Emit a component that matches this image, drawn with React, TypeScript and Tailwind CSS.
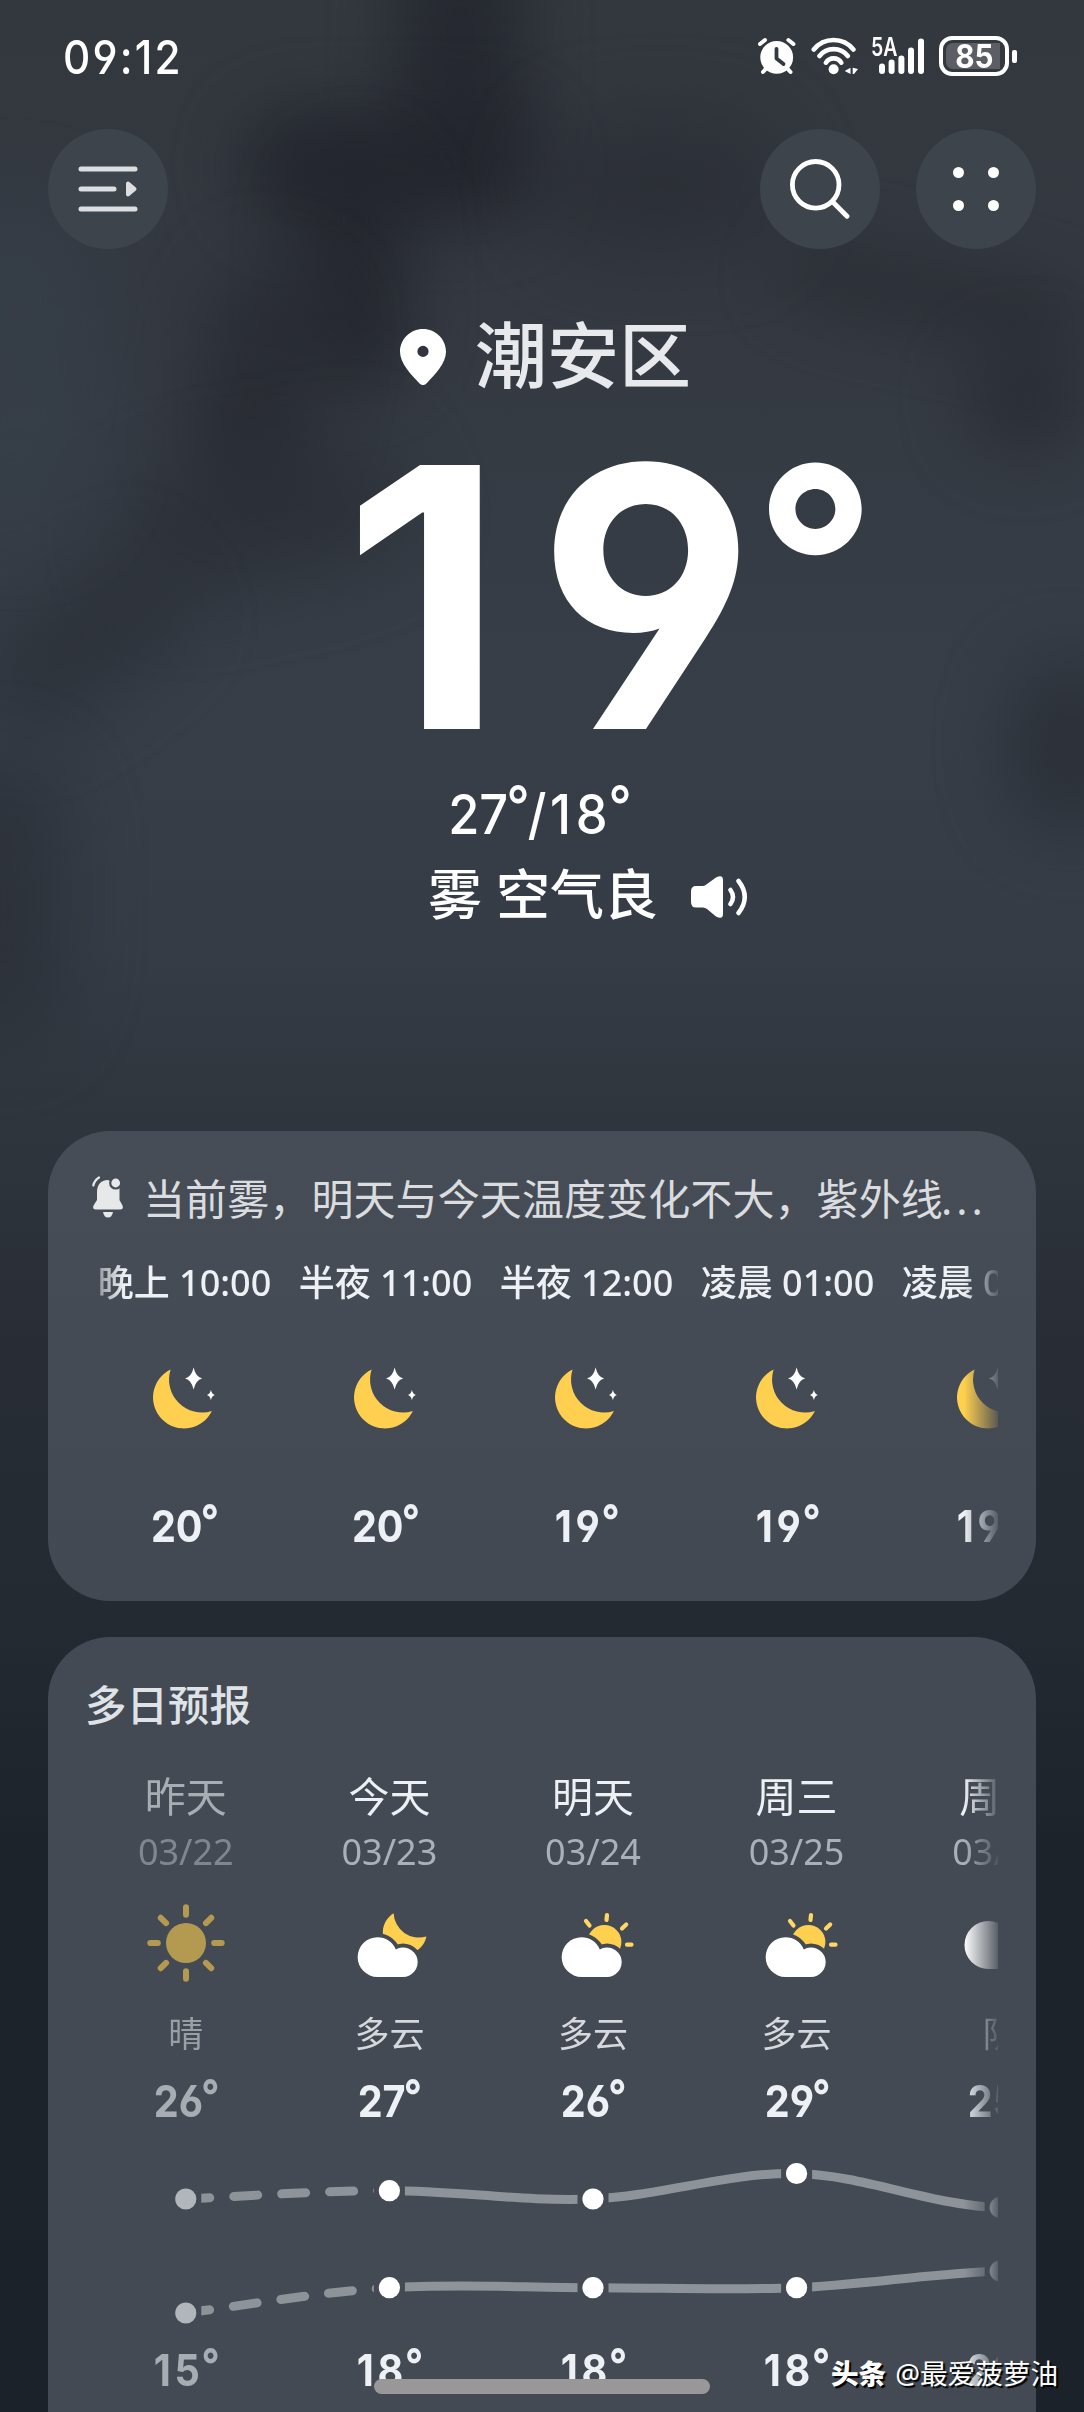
import React from 'react'
import clsx from 'clsx'

const hours = [
  { label: '晚上 10:00', temp: 20 },
  { label: '半夜 11:00', temp: 20 },
  { label: '半夜 12:00', temp: 19 },
  { label: '凌晨 01:00', temp: 19 },
  { label: '凌晨 02:00', temp: 19 },
]

type Day = {
  name: string
  date: string
  icon: React.ReactNode
  text: string
  high: number
  low: number
  past?: boolean
}

const cloudPath =
  'M26.5 32.2a19.8 19.8 0 0 1 18.3 12.2a14.7 14.7 0 1 1 6.5 27.5H26.5a19.8 19.8 0 0 1 0-39.7z'

const MoonStars = () => (
  <svg viewBox="0 0 64 64" className="h-16 w-16 overflow-visible">
    <path d="M17.6 3.5A31 31 0 1 0 58.9 45A33 33 0 0 1 17.6 3.5z" fill="#ffd04f" />
    <path d="M40.6 1.5Q42.6 10.7 49.1 12.5Q42.6 14.3 40.6 23.5Q38.6 14.3 32.1 12.5Q38.6 10.7 40.6 1.5z" fill="#fff" />
    <path d="M57.9 23.8Q58.7 28 61.8 29Q58.7 30 57.9 34.2Q57.1 30 54 29Q57.1 28 57.9 23.8z" fill="#fff" />
  </svg>
)

const Sun = () => (
  <svg viewBox="0 0 76 76" className="h-[76px] w-[76px] overflow-visible">
    <circle cx="38" cy="38" r="20" fill="#ffd04f" />
    {[0, 45, 90, 135, 180, 225, 270, 315].map((deg) => (
      <path key={deg} d="M38 2.3V9.8" stroke="#ffd04f" strokeWidth="6" strokeLinecap="round" transform={`rotate(${deg} 38 38)`} />
    ))}
  </svg>
)

const CloudMoon = () => (
  <svg viewBox="0 0 76 76" className="h-[76px] w-[76px] overflow-visible">
    <path d="M42.6 8.3A22 22 0 1 0 75.4 31.5A25.5 25.5 0 0 1 42.6 8.3z" fill="#ffd04f" />
    <path d={cloudPath} fill="#434a53" stroke="#434a53" strokeWidth="8" />
    <path d={cloudPath} fill="#fff" />
  </svg>
)

const CloudSun = () => (
  <svg viewBox="0 0 76 76" className="h-[76px] w-[76px] overflow-visible">
    <circle cx="49.4" cy="37" r="17" fill="#ffd04f" />
    <path d="M52 10L51.5 15M71.2 19.5L67 23.5M72 39.7H76.5M31 16L34.5 20.5" stroke="#ffd863" strokeWidth="4.2" strokeLinecap="round" />
    <path d={cloudPath} fill="#434a53" stroke="#434a53" strokeWidth="8" />
    <path d={cloudPath} fill="#fff" />
  </svg>
)

const Overcast = () => (
  <svg viewBox="0 0 76 76" className="h-[76px] w-[76px] overflow-visible">
    <path d="M26.5 16a24 24 0 0 1 22 14.500a17 17 0 1 1 7 33.5H26.5a24 24 0 0 1 0-48z" fill="#fff" />
  </svg>
)

const days: Day[] = [
  { name: '昨天', date: '03/22', icon: <Sun />, text: '晴', high: 26, low: 15, past: true },
  { name: '今天', date: '03/23', icon: <CloudMoon />, text: '多云', high: 27, low: 18 },
  { name: '明天', date: '03/24', icon: <CloudSun />, text: '多云', high: 26, low: 18 },
  { name: '周三', date: '03/25', icon: <CloudSun />, text: '多云', high: 29, low: 18 },
  { name: '周四', date: '03/26', icon: <Overcast />, text: '阴', high: 25, low: 20 },
]

const Temp = ({ value }: { value: number }) => (
  <span className="ml-[3px] inline-flex h-[50px] scale-x-[0.9] items-center font-[Inter] text-[44px] font-bold leading-[50px] [font-feature-settings:'cv03','cv04']">
    {/* a leading 1 is narrow, so open it up to the width of the other digits */}
    <span className={clsx(value < 20 && 'tracking-[4px]')}>{value}</span>
    <span className="relative -left-0.5 -top-[6px]">°</span>
  </span>
)

const StatusBar = () => (
  <div className="flex h-28 items-center justify-between pl-[63px] pr-[67px] text-white">
    <span className="origin-left scale-x-[0.9] font-[Inter] text-[47px] font-medium leading-none tracking-[2.4px] [font-feature-settings:'cv04']">09:12</span>
    <div className="flex items-center">
      <svg viewBox="0 0 38 38" className="h-[38px] w-[38px]" fill="none" strokeLinecap="round" strokeLinejoin="round">
        <circle cx="18.7" cy="20.3" r="16.4" fill="#fff" />
        <path d="M2 7L7 3M30.4 3L35.4 7M5 35L9.5 30M32.5 35L28 30" stroke="#fff" strokeWidth="4" />
        <path d="M18.5 12V21.5L25.5 27" stroke="#343a42" strokeWidth="3.8" />
      </svg>
      <svg viewBox="0 0 48 38" className="ml-[15px] h-[38px] w-12" fill="none" stroke="#fff" strokeWidth="4.6" strokeLinecap="round">
        <path d="M2.8 12.5A25.4 25.4 0 0 1 42.4 12.5M8.5 19A18 18 0 0 1 36.8 19M15 25.7A8.8 8.8 0 0 1 30.2 25.7" />
        <circle cx="22.6" cy="32.3" r="5" fill="#fff" stroke="none" />
        <path d="M33.7 34L39.5 30.7V37zM41.7 30.7L47 32L43 37H41.7z" fill="#fff" stroke="none" />
      </svg>
      <div className="relative ml-3 h-[38px] w-[54px]">
        <span className="absolute left-0 top-[1px] origin-left scale-x-[0.78] font-[Inter] text-[25px] font-semibold leading-[18px]">5A</span>
        <svg viewBox="0 0 54 38" className="h-full w-full" stroke="#fff" strokeWidth="6" strokeLinecap="round">
          <path d="M11 29.5V34M20.6 25.5V34M30.4 21.5V34M40 13.5V34M50 4.5V34" />
        </svg>
      </div>
      <div className="ml-[14px] flex items-center gap-[3px]">
        <div className="h-10 w-[70px] rounded-[13px] border-4 border-white p-[3px]">
          <div className="flex h-full w-[54px] items-center justify-center rounded-l-[7px] bg-[#5c5d65]">
            <span className="-mr-0.5 scale-x-[0.9] font-[Inter] text-[33px] font-bold leading-none">85</span>
          </div>
        </div>
        <div className="h-[13px] w-[5px] rounded-[2px] bg-white" />
      </div>
    </div>
  </div>
)

const TopButtons = () => (
  <div className="mt-[17px] flex items-center gap-9 px-12">
    <button className="mr-auto flex h-[120px] w-[120px] items-center justify-center rounded-full bg-[#3d444c]">
      <svg viewBox="0 0 60 46" className="h-[46px] w-[60px]" stroke="#dcdee1" strokeWidth="5" strokeLinecap="round" fill="none">
        <path d="M3 3H57M3 23H36M3 43H57" />
        <path d="M50 17.5V28.5L56.5 23z" fill="#dcdee1" strokeWidth="4" strokeLinejoin="round" />
      </svg>
    </button>
    <button className="flex h-[120px] w-[120px] items-center justify-center rounded-full bg-[#3d444c]">
      <svg viewBox="0 0 60 60" className="h-[60px] w-[60px]" stroke="#fff" strokeWidth="4.8" strokeLinecap="round" fill="none">
        <circle cx="25.7" cy="25.8" r="23.3" />
        <path d="M42.8 43L57 57.2" />
      </svg>
    </button>
    <button className="flex h-[120px] w-[120px] items-center justify-center rounded-full bg-[#3d444c]">
      <div className="grid grid-cols-2 gap-x-6 gap-y-[22px]">
        {[0, 1, 2, 3].map((i) => (
          <span key={i} className="h-[11px] w-[11px] rounded-full bg-white" />
        ))}
      </div>
    </button>
  </div>
)

const Current = () => (
  <div className="text-white">
    <div className="mt-[68px] flex h-20 items-center pl-[400px]">
      <svg viewBox="0 0 46 56" className="h-14 w-[46px]">
        <path fillRule="evenodd" d="M23 0C10.3 0 0 10.2 0 22.8C0 34.5 11 45.5 19.3 54.3Q23 57.8 26.7 54.3C35 45.5 46 34.5 46 22.8C46 10.2 35.7 0 23 0zM23 16.8a5.6 5.6 0 1 1 0 11.2a5.6 5.6 0 0 1 0-11.2z" fill="#fff" />
      </svg>
      <span className="-mt-1.5 ml-[29px] text-[72px] font-medium leading-none text-[#e8e9ec]">潮安区</span>
    </div>
    <div className="mt-[66px] flex h-[268px] pl-[343px] font-[Inter] text-[363px] font-bold leading-[268px] [font-feature-settings:'cv04']">
      <span className="w-[195px] origin-left scale-x-[1.03]">1</span>
      <span className="w-[216px] origin-left scale-x-[0.97]">9</span>
      <span className="-mt-9 text-[267px]">°</span>
    </div>
    <div className="mt-12 flex h-[70px] items-center justify-center">
      <span className="inline-flex scale-x-[0.92] font-[Inter] text-[55px] font-medium leading-none">
        27<span className="relative -left-0.5 -top-[9px] -mr-1">°</span>/<span className="ml-1 tracking-[5px]">18</span><span className="relative -left-1 -top-[9px]">°</span>
      </span>
    </div>
    <div className="mt-[11px] flex h-[70px] items-center pl-[428px]">
      <span className="-mt-0.5 text-[54px] font-medium leading-none">雾 空气良</span>
      <svg viewBox="0 0 58 42" className="ml-[33px] mt-1 h-[42px] w-[58px]" fill="none" stroke="#fff" strokeWidth="4.5" strokeLinecap="round">
        <path d="M5 10H12Q14 10 16 8L25 1.5Q32-2 32 4V38Q32 44 25 40.5L16 33Q14 31.5 12 31.5H5Q0 31.5 0 26V15.5Q0 10 5 10z" fill="#fff" stroke="none" />
        <path d="M39.5 14Q44.5 21 39.5 28M47.5 5Q60 21 47.5 37" />
      </svg>
    </div>
  </div>
)

const HourlyCard = () => (
  <section className="mx-12 h-[470px] rounded-[62px] bg-linear-to-b from-[#464d56] to-[#424952] pt-[38px]">
    <div className="flex h-[60px] items-center pl-[44px]">
      <svg viewBox="0 0 32 42" className="-mt-1 h-[42px] w-8" strokeLinecap="round">
        <path d="M16 4C8.5 4 5 9.5 5 16V24L1.5 29.5Q0 33.5 4 33.5H28Q32 33.5 30.5 29.5L27.5 24V10L16 4z" fill="#e6e8ea" />
        <circle cx="23.7" cy="7" r="6.6" fill="#464d56" />
        <circle cx="23.7" cy="7" r="4.4" fill="#e6e8ea" />
        <path d="M11 36H21Q20 41.5 16 41.5Q12 41.5 11 36z" fill="#e6e8ea" />
        <path d="M1.3 9.5Q2.3 4.5 7 1.5" stroke="#e6e8ea" strokeWidth="2.2" fill="none" />
      </svg>
      <p className="ml-[19px] whitespace-nowrap text-[42px] leading-none tracking-[0.1px] text-[#dadcdf]">
        当前雾，明天与今天温度变化不大，紫外线<span className="-ml-0.5 tracking-[4px]">...</span>
      </p>
    </div>
    <div className="ml-9 mr-[38px] flex overflow-hidden [mask-image:linear-gradient(to_right,rgba(0,0,0,0.2),#000_40px,#000_calc(100%-34px),rgba(0,0,0,0.12))]">
      {hours.map((hour, i) => (
        <div key={i} className="flex w-[201px] shrink-0 flex-col items-center text-[#edf0f4]">
          <span className="mt-[29px] flex h-[50px] items-center whitespace-nowrap text-[36px] font-medium leading-none">{hour.label}</span>
          <div className="mt-[58px]">
            <MoonStars />
          </div>
          <div className="mt-[71px] h-[50px]">
            <Temp value={hour.temp} />
          </div>
        </div>
      ))}
    </div>
  </section>
)

const columnX = [101.8, 305.4, 509, 712.6, 916.2]
const highY = [73, 64.7, 73, 47.5, 81.5]
const lowY = [187, 161.7, 161.7, 161.7, 145]

const TrendChart = () => (
  <svg viewBox="0 0 1018 219" className="block h-[219px] w-[1018px]" fill="none">
    <clipPath id="between-days">
      {columnX.map((x, i) => (
        <rect key={i} x={x + 15.5} y="0" width="172.6" height="219" />
      ))}
    </clipPath>
    <g clipPath="url(#between-days)" stroke="#8e9399" strokeWidth="9">
      <path d="M101.8 73C169.7 69.6 237.5 64.7 305.4 64.7M101.8 187C169.7 178 237.5 165.9 305.4 161.7" strokeDasharray="24 24" strokeLinecap="round" />
      <path d="M305.4 64.7C373.3 64.7 441.2 75.9 509 73C576.8 70.1 644.7 46.1 712.6 47.5C780.5 48.9 848.5 80 916.2 81.5" />
      <path d="M305.4 161.7C373.3 157.5 441.2 161.7 509 161.7C576.8 161.7 644.7 164.5 712.6 161.7C780.5 158.9 848.5 147 916.2 145" />
    </g>
    {columnX.map((x, i) => (
      <g key={i} fill={i === 0 ? '#b1b6bb' : '#fff'}>
        <circle cx={x} cy={highY[i]} r="10.6" />
        <circle cx={x} cy={lowY[i]} r="10.6" />
      </g>
    ))}
  </svg>
)

const DailyCard = () => (
  <section className="mx-12 mt-9 h-[835px] rounded-[62px] bg-[#434a53] pt-[39px]">
    <h2 className="flex h-[60px] items-center pl-[37px] text-[41.5px] font-medium leading-none text-[#dfe2e6]">多日预报</h2>
    <div className="ml-9 mr-[38px] mt-[32px] overflow-hidden [mask-image:linear-gradient(to_right,#000_calc(100%-34px),rgba(0,0,0,0.12))]">
      <div className="flex w-[1018px]">
        {days.map((day) => (
          <div key={day.date} className={clsx('flex w-[203.6px] flex-col items-center text-[#edf0f4]', day.past && 'opacity-60')}>
            <span className="flex h-14 items-center text-[41px] leading-none">{day.name}</span>
            <span className="mt-[5px] flex h-[46px] items-center text-[36px] leading-none text-[#aab0b8]">{day.date}</span>
            <div className="mt-7 flex h-20 items-center">{day.icon}</div>
            <span className="mt-[25px] flex h-[50px] items-center text-[35px] leading-none text-[#d5d8dd]">{day.text}</span>
            <div className="mt-[18px] h-[50px]">
              <Temp value={day.high} />
            </div>
          </div>
        ))}
      </div>
      <TrendChart />
      <div className="flex w-[1018px]">
        {days.map((day) => (
          <div key={day.date} className={clsx('flex h-[50px] w-[203.6px] items-center justify-center text-[#edf0f4]', day.past && 'opacity-60')}>
            <Temp value={day.low} />
          </div>
        ))}
      </div>
    </div>
  </section>
)

const Sky = () => (
  <div className="absolute inset-0 -z-10 overflow-hidden bg-[linear-gradient(to_bottom,#33383f_0,#343941_300px,#373e47_700px,#353c45_950px,#2f353d_1130px,#282d35_1350px,#232a32_1620px,#1d232b_1850px,#1c222a_2412px)]">
    <div className="absolute left-[395px] top-[-60px] h-[240px] w-[130px] rounded-full bg-[#22252d] opacity-80 blur-[32px]" />
    <div className="absolute left-[240px] top-[110px] h-[110px] w-[300px] rounded-full bg-[#22252d] opacity-90 blur-[34px]" />
    <div className="absolute left-[300px] top-[150px] h-[240px] w-[110px] rounded-full bg-[#22252d] opacity-80 blur-[32px]" />
    <div className="absolute left-[200px] top-[260px] h-[240px] w-[120px] rotate-12 rounded-full bg-[#24272f] opacity-70 blur-[36px]" />
    <div className="absolute left-[120px] top-[460px] h-[120px] w-[290px] -rotate-12 rounded-full bg-[#262a32] opacity-60 blur-[40px]" />
    <div className="absolute left-[-30px] top-[590px] h-[110px] w-[220px] -rotate-[35deg] rounded-full bg-[#262a32] opacity-55 blur-[36px]" />
    <div className="absolute left-[-60px] top-[760px] h-[280px] w-[120px] rounded-full bg-[#262a32] opacity-60 blur-[40px]" />
    <div className="absolute left-[540px] top-[120px] h-[130px] w-[240px] rounded-full bg-[#282b33] opacity-70 blur-[40px]" />
    <div className="absolute left-[780px] top-[260px] h-[70px] w-[300px] rotate-12 rounded-full bg-[#25282f] opacity-60 blur-[32px]" />
    <div className="absolute left-[970px] top-[350px] h-[100px] w-[110px] rounded-full bg-[#23262e] opacity-70 blur-[36px]" />
    <div className="absolute left-[1010px] top-[660px] h-[170px] w-[120px] rounded-full bg-[#262a32] opacity-70 blur-[36px]" />
    <div className="absolute left-[-60px] top-[200px] h-[330px] w-[150px] rounded-full bg-[#363f49] opacity-80 blur-[40px]" />
  </div>
)

const App = () => {
  return (
    <main className="relative isolate h-[2412px] w-[1084px] overflow-hidden font-['Noto_Sans','Noto_Sans_CJK_SC',sans-serif]" lang="zh-CN">
      <Sky />
      <StatusBar />
      <TopButtons />
      <Current />
      <div className="mt-[201px]">
        <HourlyCard />
        <DailyCard />
      </div>
      <div className="absolute left-[374px] top-[2379px] h-[15px] w-[336px] rounded-full bg-[#989898]" />
      <p className="absolute right-[26px] top-[2356px] flex items-center gap-[9px] whitespace-nowrap text-[27.6px] leading-[34px] text-white [text-shadow:2px_2px_1px_#000]">
        <span className="font-black">头条</span>
        <span>@最爱菠萝油</span>
      </p>
    </main>
  )
}

export default App
